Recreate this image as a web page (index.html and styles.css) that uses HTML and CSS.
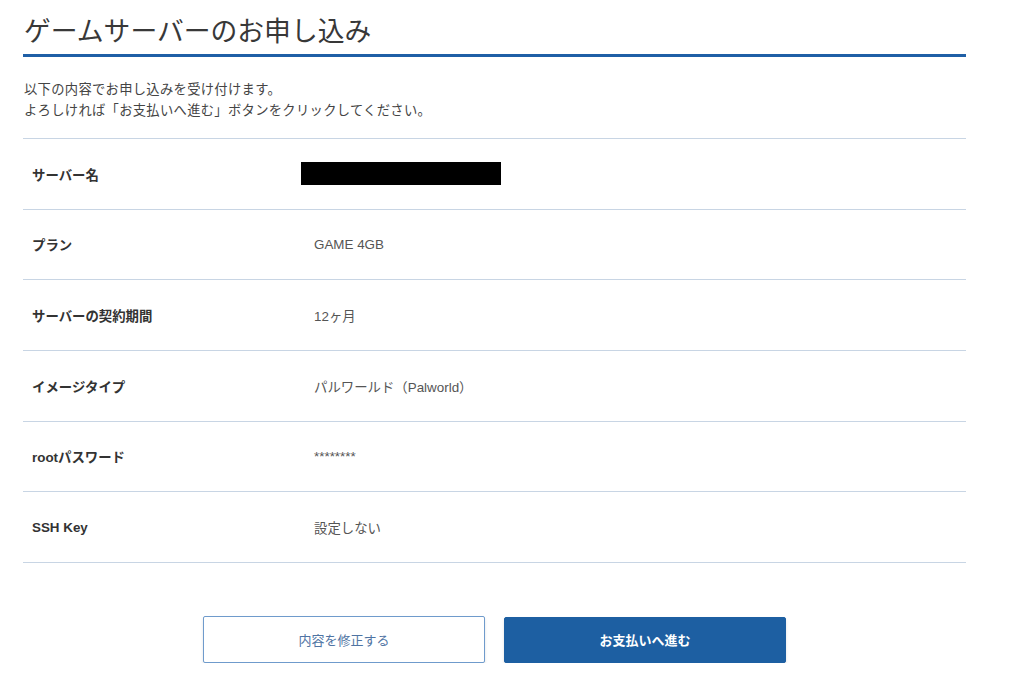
FILE: index.html
```html
<!DOCTYPE html>
<html lang="ja">
<head>
<meta charset="utf-8">
<title>ゲームサーバーのお申し込み</title>
<link rel="stylesheet" href="styles.css">
</head>
<body>
<main class="page">
  <h1 class="title">ゲームサーバーのお申し込み</h1>
  <p class="lead">以下の内容でお申し込みを受け付けます。<br>よろしければ「お支払いへ進む」ボタンをクリックしてください。</p>
  <dl class="summary">
    <div class="row"><dt class="label">サーバー名</dt><dd class="value"><span class="redact"></span></dd></div>
    <div class="row"><dt class="label">プラン</dt><dd class="value">GAME 4GB</dd></div>
    <div class="row"><dt class="label">サーバーの契約期間</dt><dd class="value">12ヶ月</dd></div>
    <div class="row"><dt class="label">イメージタイプ</dt><dd class="value">パルワールド（Palworld）</dd></div>
    <div class="row"><dt class="label">rootパスワード</dt><dd class="value">********</dd></div>
    <div class="row"><dt class="label">SSH Key</dt><dd class="value">設定しない</dd></div>
  </dl>
  <div class="actions">
    <button class="btn btn-outline" type="button">内容を修正する</button>
    <button class="btn btn-primary" type="button">お支払いへ進む</button>
  </div>
</main>
</body>
</html>
```
FILE: styles.css
```css
* { box-sizing: border-box; }
html, body { margin: 0; padding: 0; background: #fff; }
body {
  font-family: "Liberation Sans", Arial, "Noto Sans CJK JP", sans-serif;
  color: #333;
}
.page {
  width: 943px;
  margin-left: 23px;
  padding-top: 14px;
}
.title {
  margin: 0;
  font-size: 26.8px;
  font-weight: normal;
  line-height: 37px;
  color: #383838;
  padding-left: 1px;
  padding-bottom: 3px;
  border-bottom: 3px solid #1f5fa6;
}
.lead {
  margin: 22px 0 0 1px;
  font-size: 13.3px;
  line-height: 21px;
  letter-spacing: 0.3px;
  color: #444;
}
.summary {
  margin: 17px 0 0 0;
  border-top: 1px solid #c8d5e4;
}
.row {
  display: flex;
  align-items: center;
  height: 70.65px;
  border-bottom: 1px solid #c8d5e4;
  padding-left: 9px;
}
.label {
  width: 282px;
  margin: 0;
  font-size: 13.4px;
  font-weight: bold;
  color: #333;
}
.value {
  margin: 0;
  font-size: 13.4px;
  color: #555;
}
.redact {
  display: inline-block;
  width: 200px;
  height: 23px;
  background: #000;
  margin-left: -13px;
  vertical-align: middle;
}
.actions {
  display: flex;
  justify-content: center;
  gap: 19px;
  margin-top: 53px;
}
.btn {
  width: 282px;
  height: 47px;
  font-family: "Liberation Sans", Arial, "Noto Sans CJK JP", sans-serif;
  font-size: 13px;
  border-radius: 2px;
  cursor: pointer;
  box-shadow: 0 2px 3px rgba(0, 0, 0, 0.12);
}
.btn-outline {
  background: #fff;
  border: 1.5px solid #6f9bcc;
  color: #4f74a3;
}
.btn-primary {
  background: #1d5fa2;
  border: 1px solid #1d5fa2;
  color: #fff;
  font-weight: bold;
  height: 46px;
  margin-top: 1px;
}
```
